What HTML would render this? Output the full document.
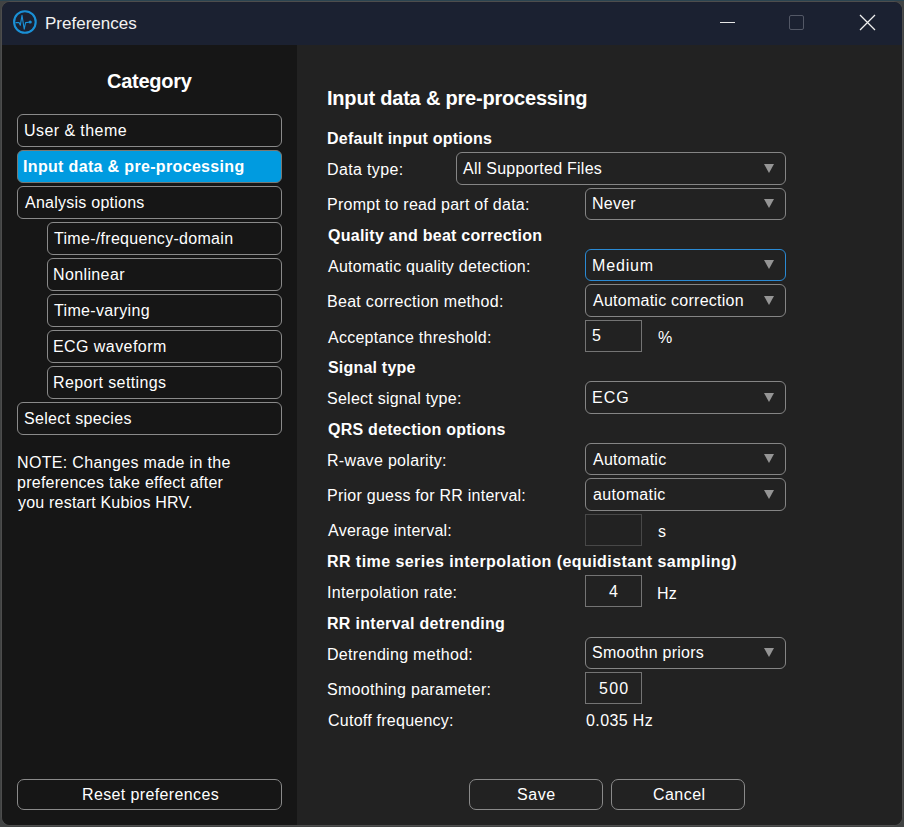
<!DOCTYPE html>
<html><head><meta charset="utf-8">
<style>
*{box-sizing:border-box;margin:0;padding:0}
html,body{width:904px;height:827px;overflow:hidden;background:#414343;font-family:"Liberation Sans",sans-serif;color:#fff}
#win{position:absolute;left:1px;top:1px;width:902px;height:825px;border:1px solid #4d4d4d;border-radius:9px;overflow:hidden;background:#222}
#title{position:absolute;left:0;top:0;width:900px;height:43px;background:#1b2131}
#left{position:absolute;left:0;top:43px;width:295px;height:780px;background:#161616}
#right{position:absolute;left:295px;top:43px;width:605px;height:780px;background:#222222}
.t{position:absolute;white-space:nowrap;color:#fff}
.bx{position:absolute;border:1px solid #8a8a8a}
.ar{position:absolute;width:0;height:0;border-left:5.5px solid transparent;border-right:5.5px solid transparent;border-top:9px solid #959595}
.abs{position:absolute}
</style></head><body>
<div class="abs" style="left:0;top:0;width:904px;height:1px;background:#2b4450"></div>
<div id="win">
  <div id="title">
    <svg class="abs" style="left:9px;top:6px" width="30" height="30" viewBox="11 8 30 30">
      <circle cx="24.9" cy="22" r="10.8" fill="none" stroke="#1a90d6" stroke-width="2.1"/>
      <path d="M15.9 22.6 L19 22.6 L20.3 25.3 L22 15.3 L24.2 29.2 L25.6 22.6 L29 22.2" fill="none" stroke="#1a90d6" stroke-width="1.1" stroke-linejoin="round" stroke-linecap="round"/>
      <circle cx="30.2" cy="22" r="1.6" fill="#1a90d6"/>
    </svg>
    <div class="t" style="left:43px;top:12px;font-size:17px;line-height:20px;color:#f2f2f2">Preferences</div>
    <div class="abs" style="left:718px;top:20px;width:15px;height:1px;background:#e6e6e6"></div>
    <div class="abs" style="left:787px;top:13px;width:15px;height:15px;border:1.3px solid #535866;border-radius:2px"></div>
    <svg class="abs" style="left:857px;top:12px" width="17" height="17" viewBox="0 0 17 17"><path d="M1 1 L16 16 M16 1 L1 16" stroke="#f0f0f0" stroke-width="1.3"/></svg>
  </div>
  <div id="left"></div>
  <div id="right"></div>
<div class="bx" style="left:15px;top:112px;width:265px;height:33px;border-color:#8a8a8a;border-radius:6px;"></div>
<div class="bx" style="left:15px;top:148px;width:265px;height:33px;border-color:#7a7872;border-radius:6px;background:#009be0;"></div>
<div class="bx" style="left:15px;top:184px;width:265px;height:33px;border-color:#8a8a8a;border-radius:6px;"></div>
<div class="bx" style="left:45px;top:220px;width:235px;height:33px;border-color:#8a8a8a;border-radius:6px;"></div>
<div class="bx" style="left:45px;top:256px;width:235px;height:33px;border-color:#8a8a8a;border-radius:6px;"></div>
<div class="bx" style="left:45px;top:292px;width:235px;height:33px;border-color:#8a8a8a;border-radius:6px;"></div>
<div class="bx" style="left:45px;top:328px;width:235px;height:33px;border-color:#8a8a8a;border-radius:6px;"></div>
<div class="bx" style="left:45px;top:364px;width:235px;height:33px;border-color:#8a8a8a;border-radius:6px;"></div>
<div class="bx" style="left:15px;top:400px;width:265px;height:33px;border-color:#8a8a8a;border-radius:6px;"></div>
<div class="bx" style="left:15px;top:777px;width:265px;height:31px;border-color:#8a8a8a;border-radius:7px;"></div>
<div class="bx" style="left:454px;top:150px;width:330px;height:33px;border-color:#858585;border-radius:6px;"></div>
<div class="bx" style="left:583px;top:186px;width:201px;height:32px;border-color:#858585;border-radius:6px;"></div>
<div class="bx" style="left:583px;top:247px;width:201px;height:32px;border-color:#2a8ad4;border-radius:6px;"></div>
<div class="bx" style="left:583px;top:282px;width:201px;height:33px;border-color:#858585;border-radius:6px;"></div>
<div class="bx" style="left:583px;top:318px;width:57px;height:32px;border-color:#747474;border-radius:0px;"></div>
<div class="bx" style="left:583px;top:379px;width:201px;height:33px;border-color:#858585;border-radius:6px;"></div>
<div class="bx" style="left:583px;top:441px;width:201px;height:32px;border-color:#858585;border-radius:6px;"></div>
<div class="bx" style="left:583px;top:476px;width:201px;height:33px;border-color:#858585;border-radius:6px;"></div>
<div class="bx" style="left:583px;top:512px;width:57px;height:32px;border-color:#484848;border-radius:0px;"></div>
<div class="bx" style="left:583px;top:573px;width:57px;height:32px;border-color:#747474;border-radius:0px;"></div>
<div class="bx" style="left:583px;top:635px;width:201px;height:32px;border-color:#858585;border-radius:6px;"></div>
<div class="bx" style="left:583px;top:670px;width:57px;height:32px;border-color:#747474;border-radius:0px;"></div>
<div class="bx" style="left:467px;top:777px;width:134px;height:31px;border-color:#8a8a8a;border-radius:7px;"></div>
<div class="bx" style="left:609px;top:777px;width:134px;height:31px;border-color:#8a8a8a;border-radius:7px;"></div>
<div class="ar" style="left:762px;top:162px"></div>
<div class="ar" style="left:762px;top:197px"></div>
<div class="ar" style="left:762px;top:258px"></div>
<div class="ar" style="left:762px;top:294px"></div>
<div class="ar" style="left:762px;top:391px"></div>
<div class="ar" style="left:762px;top:452px"></div>
<div class="ar" style="left:762px;top:488px"></div>
<div class="ar" style="left:762px;top:646px"></div>
<div class="t" id="cat" style="left:105.00px;top:68px;font-size:20px;line-height:22px;letter-spacing:-0.271px;font-weight:bold;">Category</div>
<div class="t" id="lb0" style="left:22.00px;top:120px;font-size:16px;line-height:18px;letter-spacing:0.432px;">User &amp; theme</div>
<div class="t" id="lb1" style="left:21.00px;top:156px;font-size:16px;line-height:18px;letter-spacing:0.338px;font-weight:bold;">Input data &amp; pre-processing</div>
<div class="t" id="lb2" style="left:23.00px;top:192px;font-size:16px;line-height:18px;letter-spacing:0.250px;">Analysis options</div>
<div class="t" id="lb3" style="left:52.00px;top:228px;font-size:16px;line-height:18px;letter-spacing:0.298px;">Time-/frequency-domain</div>
<div class="t" id="lb4" style="left:51.00px;top:264px;font-size:16px;line-height:18px;letter-spacing:0.375px;">Nonlinear</div>
<div class="t" id="lb5" style="left:52.00px;top:300px;font-size:16px;line-height:18px;letter-spacing:0.341px;">Time-varying</div>
<div class="t" id="lb6" style="left:51.00px;top:336px;font-size:16px;line-height:18px;letter-spacing:0.432px;">ECG waveform</div>
<div class="t" id="lb7" style="left:51.00px;top:372px;font-size:16px;line-height:18px;letter-spacing:0.393px;">Report settings</div>
<div class="t" id="lb8" style="left:22.00px;top:408px;font-size:16px;line-height:18px;letter-spacing:0.327px;">Select species</div>
<div class="t" id="note1" style="left:15.00px;top:452px;font-size:16px;line-height:18px;letter-spacing:0.333px;">NOTE: Changes made in the</div>
<div class="t" id="note2" style="left:15.00px;top:472px;font-size:16px;line-height:18px;letter-spacing:0.250px;">preferences take effect after</div>
<div class="t" id="note3" style="left:16.00px;top:492px;font-size:16px;line-height:18px;letter-spacing:0.205px;">you restart Kubios HRV.</div>
<div class="t" id="reset" style="left:80.00px;top:784px;font-size:16px;line-height:18px;letter-spacing:0.375px;">Reset preferences</div>
<div class="t" id="h1" style="left:325.00px;top:85px;font-size:20px;line-height:22px;letter-spacing:-0.200px;font-weight:bold;">Input data &amp; pre-processing</div>
<div class="t" id="s1" style="left:325.00px;top:128px;font-size:16px;line-height:18px;letter-spacing:0.250px;font-weight:bold;">Default input options</div>
<div class="t" id="l1" style="left:325.00px;top:159px;font-size:16px;line-height:18px;letter-spacing:0.361px;">Data type:</div>
<div class="t" id="d1" style="left:461.00px;top:158px;font-size:16px;line-height:18px;letter-spacing:0.250px;">All Supported Files</div>
<div class="t" id="l2" style="left:325.00px;top:194px;font-size:16px;line-height:18px;letter-spacing:0.250px;">Prompt to read part of data:</div>
<div class="t" id="d2" style="left:590.00px;top:193px;font-size:16px;line-height:18px;letter-spacing:0.250px;">Never</div>
<div class="t" id="s2" style="left:326.00px;top:225px;font-size:16px;line-height:18px;letter-spacing:0.262px;font-weight:bold;">Quality and beat correction</div>
<div class="t" id="l3" style="left:326.00px;top:256px;font-size:16px;line-height:18px;letter-spacing:0.250px;">Automatic quality detection:</div>
<div class="t" id="d3" style="left:590.00px;top:255px;font-size:16px;line-height:18px;letter-spacing:0.850px;">Medium</div>
<div class="t" id="l4" style="left:325.00px;top:291px;font-size:16px;line-height:18px;letter-spacing:0.295px;">Beat correction method:</div>
<div class="t" id="d4" style="left:591.00px;top:290px;font-size:16px;line-height:18px;letter-spacing:0.250px;">Automatic correction</div>
<div class="t" id="l5" style="left:326.00px;top:327px;font-size:16px;line-height:18px;letter-spacing:0.250px;">Acceptance threshold:</div>
<div class="t" id="v5" style="left:590.00px;top:325px;font-size:16px;line-height:18px;letter-spacing:0.250px;">5</div>
<div class="t" id="u5" style="left:656.00px;top:327px;font-size:16px;line-height:18px;letter-spacing:0.250px;">%</div>
<div class="t" id="s3" style="left:326.00px;top:357px;font-size:16px;line-height:18px;letter-spacing:0.200px;font-weight:bold;">Signal type</div>
<div class="t" id="l6" style="left:325.00px;top:388px;font-size:16px;line-height:18px;letter-spacing:0.250px;">Select signal type:</div>
<div class="t" id="d6" style="left:590.00px;top:387px;font-size:16px;line-height:18px;letter-spacing:1.000px;">ECG</div>
<div class="t" id="s4" style="left:326.00px;top:419px;font-size:16px;line-height:18px;letter-spacing:0.250px;font-weight:bold;">QRS detection options</div>
<div class="t" id="l7" style="left:325.00px;top:450px;font-size:16px;line-height:18px;letter-spacing:0.317px;">R-wave polarity:</div>
<div class="t" id="d7" style="left:591.00px;top:449px;font-size:16px;line-height:18px;letter-spacing:0.250px;">Automatic</div>
<div class="t" id="l8" style="left:325.00px;top:485px;font-size:16px;line-height:18px;letter-spacing:0.250px;">Prior guess for RR interval:</div>
<div class="t" id="d8" style="left:591.00px;top:484px;font-size:16px;line-height:18px;letter-spacing:0.375px;">automatic</div>
<div class="t" id="l9" style="left:326.00px;top:520px;font-size:16px;line-height:18px;letter-spacing:0.250px;">Average interval:</div>
<div class="t" id="u9" style="left:656.00px;top:521px;font-size:16px;line-height:18px;letter-spacing:0.250px;">s</div>
<div class="t" id="s5" style="left:325.00px;top:551px;font-size:16px;line-height:18px;letter-spacing:0.440px;font-weight:bold;">RR time series interpolation (equidistant sampling)</div>
<div class="t" id="l10" style="left:325.00px;top:582px;font-size:16px;line-height:18px;letter-spacing:0.306px;">Interpolation rate:</div>
<div class="t" id="v10" style="left:607.00px;top:581px;font-size:16px;line-height:18px;letter-spacing:0.250px;">4</div>
<div class="t" id="u10" style="left:655.00px;top:583px;font-size:16px;line-height:18px;letter-spacing:0.250px;">Hz</div>
<div class="t" id="s6" style="left:325.00px;top:613px;font-size:16px;line-height:18px;letter-spacing:0.300px;font-weight:bold;">RR interval detrending</div>
<div class="t" id="l11" style="left:325.00px;top:644px;font-size:16px;line-height:18px;letter-spacing:0.309px;">Detrending method:</div>
<div class="t" id="d11" style="left:590.00px;top:642px;font-size:16px;line-height:18px;letter-spacing:0.250px;">Smoothn priors</div>
<div class="t" id="l12" style="left:325.00px;top:679px;font-size:16px;line-height:18px;letter-spacing:0.303px;">Smoothing parameter:</div>
<div class="t" id="v12" style="left:597.00px;top:678px;font-size:16px;line-height:18px;letter-spacing:1.250px;">500</div>
<div class="t" id="l13" style="left:326.00px;top:710px;font-size:16px;line-height:18px;letter-spacing:0.250px;">Cutoff frequency:</div>
<div class="t" id="v13" style="left:584.00px;top:710px;font-size:16px;line-height:18px;letter-spacing:0.393px;">0.035 Hz</div>
<div class="t" id="save" style="left:515.00px;top:784px;font-size:16px;line-height:18px;letter-spacing:0.583px;">Save</div>
<div class="t" id="cancel" style="left:651.00px;top:784px;font-size:16px;line-height:18px;letter-spacing:0.450px;">Cancel</div>
</div>
</body></html>
